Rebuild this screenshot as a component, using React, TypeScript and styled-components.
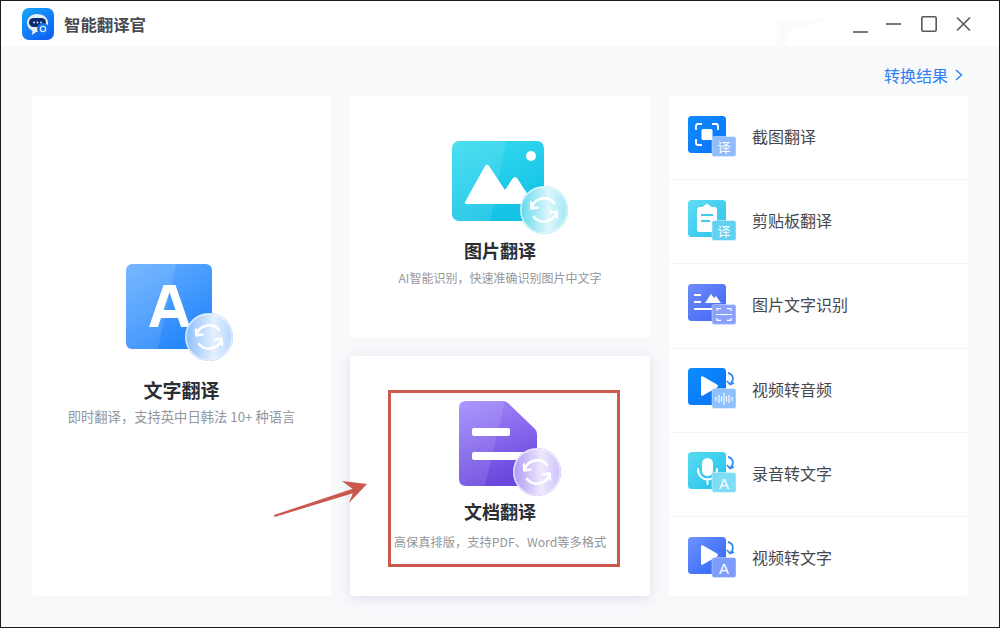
import React from 'react';
import styled, { createGlobalStyle } from 'styled-components';

const GlobalStyle = createGlobalStyle`
  html, body {
    margin: 0;
    padding: 0;
    background: #f8f9fb;
  }
  * {
    box-sizing: border-box;
  }
`;

const Window = styled.div`
  position: relative;
  width: 1000px;
  height: 628px;
  display: flex;
  flex-direction: column;
  overflow: hidden;
  background: #f8f9fb;
  border: 1px solid #1c1c1c;
  font-family: "Noto Sans CJK SC", "Liberation Sans", sans-serif;
`;

const TitleBar = styled.header`
  height: 45px;
  flex: none;
  display: flex;
  align-items: center;
  padding: 0 21px;
  background: #fff;
`;

const AppName = styled.span`
  margin-left: 10px;
  font-size: 16.4px;
  font-weight: 700;
  color: #484b52;
`;

const WindowButtons = styled.div`
  margin-left: auto;
  display: flex;
  align-items: center;
  margin-right: 7px;
  margin-top: -6px;
`;

const Content = styled.main`
  flex: 1;
  display: flex;
  flex-direction: column;
  padding: 0 31px 30px;
`;

const ResultRow = styled.div`
  height: 50px;
  flex: none;
  display: flex;
  justify-content: flex-end;
  align-items: center;
`;

const ResultLink = styled.a`
  display: flex;
  align-items: center;
  gap: 7px;
  margin-right: 5px;
  margin-top: 7px;
  font-size: 16px;
  color: #2f80f7;
`;

const Board = styled.div`
  flex: 1;
  display: grid;
  grid-template-columns: 299px 300px 299px;
  grid-template-rows: 241px 240px;
  column-gap: 19px;
  row-gap: 19px;
`;

const Card = styled.section<{ $raised?: boolean; $tall?: boolean; $top: number }>`
  display: flex;
  flex-direction: column;
  align-items: center;
  padding-top: ${p => p.$top}px;
  background: #fff;
  border-radius: 4px;
  grid-row: ${p => (p.$tall ? '1 / 3' : 'auto')};
  box-shadow: ${p => (p.$raised ? '0 2px 12px rgba(120, 130, 170, 0.22)' : 'none')};
`;

const CardIcon = styled.div`
  height: 95px;
  width: 120px;
  flex: none;

  svg {
    display: block;
    overflow: visible;
  }
`;

const CardTitle = styled.h2<{ $gap: number; $size?: number }>`
  margin: ${p => p.$gap}px 0 0;
  font-size: ${p => p.$size ?? 18}px;
  line-height: 26px;
  font-weight: 700;
  color: #2b2e33;
`;

const CardHint = styled.p<{ $gap: number; $size?: number }>`
  margin: ${p => p.$gap}px 0 0;
  font-size: ${p => p.$size ?? 12}px;
  line-height: 17px;
  color: #93969c;
`;

const ToolList = styled.nav`
  grid-column: 3;
  grid-row: 1 / 3;
  display: flex;
  flex-direction: column;
  overflow: hidden;
  background: #fff;
  border-radius: 4px;
`;

const ToolRow = styled.div`
  height: 84.2px;
  flex: none;
  display: flex;
  align-items: center;
  gap: 16px;
  padding-left: 19px;
  padding-bottom: 3px;
  border-bottom: 1px solid #f3f5fa;
`;

const ToolName = styled.span`
  font-size: 16px;
  color: #45484e;
`;

const ToolSvg = styled.svg`
  flex: none;
  overflow: visible;
`;

const Highlight = styled.div`
  position: absolute;
  left: 387px;
  top: 389px;
  width: 232px;
  height: 177px;
  border: 3px solid #cd5a4e;
  pointer-events: none;
`;

const Arrow = styled.svg`
  position: absolute;
  left: 268px;
  top: 474px;
`;

const TitleStreak = styled.svg`
  position: absolute;
  left: 770px;
  top: 10px;
`;

const SyncBadge = ({ id, x, y, tint }: { id: string; x: number; y: number; tint: string }) => (
  <g transform={`translate(${x} ${y})`}>
    <defs>
      <linearGradient id={id} x1="0" x2="1" y1="0" y2="0">
        <stop offset="0" stopColor="#fff" stopOpacity="0.1" />
        <stop offset="0.6" stopColor="#fff" stopOpacity="0.8" />
        <stop offset="1" stopColor="#fff" stopOpacity="0.45" />
      </linearGradient>
    </defs>
    <circle r="24" fill={tint} />
    <circle r="23.2" fill={`url(#${id})`} stroke="#fff" strokeOpacity="0.7" strokeWidth="1.4" />
    <g fill="none" stroke="#fff" strokeWidth="2.6" strokeLinecap="round" strokeLinejoin="round">
      <path d="M-12.5 -2 A13 13 0 0 1 10 -7" />
      <path d="M-13 -7.5 L-12.5 -1.5 L-6.5 -2.5" />
      <path d="M12.5 2 A13 13 0 0 1 -10 7" />
      <path d="M13 7.5 L12.5 1.5 L6.5 2.5" />
    </g>
  </g>
);

const Sheen = ({ d }: { d: string }) => <path d={d} fill="#fff" opacity="0.1" />;

const TextIcon = () => (
  <svg width="120" height="95" viewBox="0 0 120 95">
    <defs>
      <linearGradient id="txt" x1="0" y1="0" x2="0.6" y2="1">
        <stop offset="0" stopColor="#69b1ff" />
        <stop offset="1" stopColor="#2586fb" />
      </linearGradient>
    </defs>
    <rect x="4" y="0" width="86" height="85" rx="6" fill="url(#txt)" />
    <Sheen d="M10 0 H54 L36 85 H10 a6 6 0 0 1 -6 -6 V6 a6 6 0 0 1 6 -6z" />
    <path d="M41.5 21 H53.5 L68 63 H59 L56 54 H39 L36 63 H27 Z M41.5 46 H53.5 L47.5 28Z" fill="#fff" fillRule="evenodd" />
    <SyncBadge id="s1" x={87} y={73} tint="#7db6fb" />
  </svg>
);

const PictureIcon = () => (
  <svg width="120" height="95" viewBox="0 0 120 95">
    <defs>
      <linearGradient id="pic" x1="0" y1="0" x2="0.5" y2="1">
        <stop offset="0" stopColor="#37dcef" />
        <stop offset="1" stopColor="#14c2e6" />
      </linearGradient>
    </defs>
    <rect x="12" y="0" width="92" height="80" rx="7" fill="url(#pic)" />
    <Sheen d="M19 0 H66 L50 80 H19 a7 7 0 0 1 -7 -7 V7 a7 7 0 0 1 7 -7z" />
    <circle cx="91" cy="15" r="5" fill="#fff" />
    <path d="M25 61 L45 25 Q47 22 49 25 L65 49 L73 37 Q75 35 77 37 L92 60 V63 H27 Q24 63 25 61Z" fill="#fff" />
    <SyncBadge id="s2" x={104} y={69} tint="#54d5ed" />
  </svg>
);

const DocIcon = () => (
  <svg width="120" height="95" viewBox="0 0 120 95">
    <defs>
      <linearGradient id="doc" x1="0" y1="0" x2="0.3" y2="1">
        <stop offset="0" stopColor="#a48bfd" />
        <stop offset="1" stopColor="#6a48dd" />
      </linearGradient>
    </defs>
    <path d="M26 0 H63 Q66 0 68 2 L95 28 Q97 30 97 33 V78 Q97 85 90 85 H26 Q19 85 19 78 V7 Q19 0 26 0Z" fill="url(#doc)" />
    <Sheen d="M26 0 H65 L45 85 H26 Q19 85 19 78 V7 Q19 0 26 0Z" />
    <rect x="32" y="27" width="38" height="8" rx="2" fill="#fff" />
    <rect x="32" y="51" width="56" height="8" rx="2" fill="#fff" />
    <SyncBadge id="s3" x={97} y={71} tint="#a78ff5" />
  </svg>
);

type Kind = 'crop' | 'clip' | 'img' | 'audio' | 'mic' | 'video';

const toolColors: Record<Kind, [string, string, string]> = {
  crop: ['#0f8cff', '#0a73f6', '#8fbcfb'],
  clip: ['#5fdcf2', '#2cc4ec', '#62d2f3'],
  img: ['#6f8bfb', '#3f66f2', '#8aa0fa'],
  audio: ['#0d8eff', '#0a6ff5', '#8cc1fb'],
  mic: ['#57dcf1', '#22c0ea', '#7fdcf5'],
  video: ['#6e92ff', '#2f63f5', '#7e9cfb'],
};

const ReturnArrow = () => (
  <path d="M40 5 C45 6 47 12 42 16 M39 13 L42 16.5 L46 15" fill="none" stroke="#2c8af5" strokeWidth="1.8" />
);

const ToolGlyph = ({ kind }: { kind: Kind }) => {
  switch (kind) {
    case 'crop':
      return (
        <g>
          <path d="M8 14 V10 Q8 8 10 8 H14 M24 8 H28 Q30 8 30 10 V14 M30 23 V27 Q30 29 28 29 H24 M14 29 H10 Q8 29 8 27 V23" fill="none" stroke="#fff" strokeWidth="1.8" />
          <rect x="13.5" y="13" width="11" height="11" rx="1.5" fill="#fff" />
        </g>
      );
    case 'clip':
      return (
        <g>
          <rect x="9" y="7" width="20" height="25" rx="2.5" fill="#fff" />
          <path d="M14.5 7 L19 3.5 L23.5 7Z" fill="#fff" />
          <rect x="13" y="14" width="12" height="2" fill="#3fcdee" />
          <rect x="13" y="20" width="9" height="2" fill="#3fcdee" />
        </g>
      );
    case 'img':
      return (
        <g fill="#fff">
          <rect x="6" y="10" width="7" height="2" />
          <rect x="6" y="17" width="7" height="2" />
          <rect x="6" y="24" width="26" height="2" />
          <path d="M17 19 L23 10 L26 14 L28 12 L33 19Z" />
        </g>
      );
    case 'mic':
      return (
        <g>
          <rect x="14" y="6" width="11" height="18" rx="5.5" fill="#fff" />
          <path d="M10 17 C10 31 29 31 29 17 M19.5 27 V32" fill="none" stroke="#fff" strokeWidth="2" strokeLinecap="round" />
        </g>
      );
    default:
      return <path d="M13 9.5 Q13 7.5 15 8.5 L29 16.5 Q31 18 29 19.5 L15 27.5 Q13 28.5 13 26.5Z" fill="#fff" />;
  }
};

const ToolBadge = ({ kind }: { kind: Kind }) => {
  if (kind === 'crop' || kind === 'clip') {
    return <text x="36" y="36" textAnchor="middle" fontSize="13" fill="#fff" fontFamily="Noto Sans CJK SC">译</text>;
  }
  if (kind === 'mic' || kind === 'video') {
    return <text x="36" y="36.5" textAnchor="middle" fontSize="15" fill="#fff" fontFamily="Liberation Sans">A</text>;
  }
  if (kind === 'img') {
    return (
      <path d="M29 27 V24.6 H33 M39 24.6 H43 V27 M43 34 V36.4 H39 M33 36.4 H29 V34 M28 30.5 H44" fill="none" stroke="#fff" strokeWidth="1.2" />
    );
  }
  return (
    <path d="M28 29 V33 M31 27 V35 M33.5 28.5 V33.5 M36 25 V37 M38.5 28 V34 M41 27 V35 M44 29 V33" stroke="#fff" strokeWidth="1.1" />
  );
};

const ToolIcon = ({ kind }: { kind: Kind }) => {
  const [from, to, badge] = toolColors[kind];
  const hasReturn = kind === 'audio' || kind === 'mic' || kind === 'video';
  return (
    <ToolSvg width="48" height="41" viewBox="0 0 48 41">
      <defs>
        <linearGradient id={`t-${kind}`} x1="0" y1="0" x2="1" y2="1">
          <stop offset="0" stopColor={from} />
          <stop offset="1" stopColor={to} />
        </linearGradient>
      </defs>
      <rect x="0" y="0" width="38" height="37" rx="3.5" fill={`url(#t-${kind})`} />
      <ToolGlyph kind={kind} />
      {hasReturn && <ReturnArrow />}
      <rect x="24" y="20.5" width="24" height="20" rx="2" fill={badge} stroke="#fff" strokeOpacity="0.5" strokeWidth="0.8" />
      <ToolBadge kind={kind} />
    </ToolSvg>
  );
};

const tools: { kind: Kind; name: string }[] = [
  { kind: 'crop', name: '截图翻译' },
  { kind: 'clip', name: '剪贴板翻译' },
  { kind: 'img', name: '图片文字识别' },
  { kind: 'audio', name: '视频转音频' },
  { kind: 'mic', name: '录音转文字' },
  { kind: 'video', name: '视频转文字' },
];

const Logo = () => (
  <svg width="32" height="32" viewBox="0 0 32 32">
    <defs>
      <linearGradient id="logo" x1="0" y1="0" x2="0.7" y2="1">
        <stop offset="0" stopColor="#18a6fb" />
        <stop offset="1" stopColor="#0e62f2" />
      </linearGradient>
    </defs>
    <rect width="32" height="32" rx="7" fill="url(#logo)" />
    <path d="M15 6 C22 6 26 10 26 15 C26 21 21 24 15 24 C13 24 12 26 10 27 L10.5 23 C7 21 5 18 5 15 C5 10 9 6 15 6Z" fill="#e8eef6" />
    <rect x="7" y="10" width="17" height="9" rx="4.5" fill="#0c2a6e" />
    <g fill="#cfe4ff">
      <circle cx="12" cy="14.5" r="1" />
      <circle cx="15.5" cy="14.5" r="1" />
      <circle cx="19" cy="14.5" r="1" />
    </g>
    <circle cx="21" cy="21" r="6" fill="#1474ee" />
    <circle cx="21" cy="21" r="2.6" fill="none" stroke="#d8ecff" strokeWidth="1.2" />
  </svg>
);

const WindowControls = () => (
  <svg width="118" height="24" viewBox="0 0 118 24" fill="none" stroke="#54575c" strokeWidth="1.6">
    <path d="M0 23 H15" />
    <path d="M33 15 H48" />
    <rect x="68.8" y="7.8" width="14.4" height="14.4" rx="1.5" />
    <path d="M104 8.5 L117 21.5 M117 8.5 L104 21.5" />
  </svg>
);

export default function App() {
  return (
    <Window>
      <GlobalStyle />
      <TitleBar>
        <Logo />
        <AppName>智能翻译官</AppName>
        <WindowButtons>
          <WindowControls />
        </WindowButtons>
      </TitleBar>
      <TitleStreak width="80" height="34" viewBox="0 0 80 34" fill="#fbfbfc">
        <path d="M0 12 L60 8 L20 18 L14 34 L4 34 L8 18 Z" />
      </TitleStreak>
      <Content>
        <ResultRow>
          <ResultLink>
            转换结果
            <svg width="8" height="12" viewBox="0 0 8 12" fill="none" stroke="#2f80f7" strokeWidth="1.4">
              <path d="M1 1 L6.5 6 L1 11" />
            </svg>
          </ResultLink>
        </ResultRow>
        <Board>
          <Card $tall $top={168}>
            <CardIcon>
              <TextIcon />
            </CardIcon>
            <CardTitle $gap={18} $size={19}>文字翻译</CardTitle>
            <CardHint $gap={5} $size={13.3}>即时翻译，支持英中日韩法 10+ 种语言</CardHint>
          </Card>
          <Card $top={45}>
            <CardIcon>
              <PictureIcon />
            </CardIcon>
            <CardTitle $gap={1}>图片翻译</CardTitle>
            <CardHint $gap={6}>AI智能识别，快速准确识别图片中文字</CardHint>
          </Card>
          <ToolList>
            {tools.map(t => (
              <ToolRow key={t.kind}>
                <ToolIcon kind={t.kind} />
                <ToolName>{t.name}</ToolName>
              </ToolRow>
            ))}
          </ToolList>
          <Card $raised $top={45}>
            <CardIcon>
              <DocIcon />
            </CardIcon>
            <CardTitle $gap={2}>文档翻译</CardTitle>
            <CardHint $gap={10} $size={12.25}>高保真排版，支持PDF、Word等多格式</CardHint>
          </Card>
        </Board>
      </Content>
      <Highlight />
      <Arrow width="105" height="50" viewBox="0 0 105 50">
        <path d="M5 40 L5.6 42 L88 17 L86 13 Z" fill="#c9594c" />
        <path d="M98 9 L73 6 L85 15 L80 28 Z" fill="#c9594c" />
      </Arrow>
    </Window>
  );
}
